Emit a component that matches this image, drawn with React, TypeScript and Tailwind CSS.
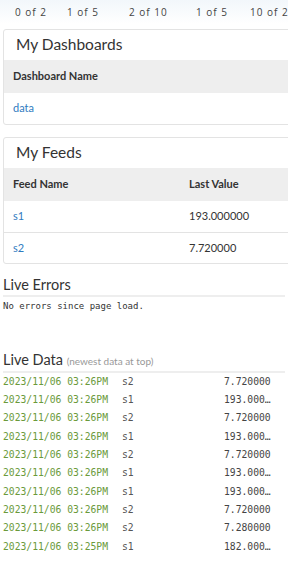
// Страница устройства: дашборды, фиды, ошибки и живые данные

import React from 'react';

const pagers = [
  { label: '0 of 2', w: 'w-[52px]' },
  { label: '1 of 5', w: 'w-[62px]' },
  { label: '2 of 10', w: 'w-[67px]' },
  { label: '1 of 5', w: 'w-[54px]' },
  { label: '10 of 2', w: 'w-[60px]' },
];

const feeds = [
  { name: 's1', value: '193.000000' },
  { name: 's2', value: '7.720000' },
];

const liveData = [
  { time: '2023/11/06 03:26PM', feed: 's2', value: '7.720000' },
  { time: '2023/11/06 03:26PM', feed: 's1', value: '193.000000' },
  { time: '2023/11/06 03:26PM', feed: 's2', value: '7.720000' },
  { time: '2023/11/06 03:26PM', feed: 's1', value: '193.000000' },
  { time: '2023/11/06 03:26PM', feed: 's2', value: '7.720000' },
  { time: '2023/11/06 03:26PM', feed: 's1', value: '193.000000' },
  { time: '2023/11/06 03:26PM', feed: 's1', value: '193.000000' },
  { time: '2023/11/06 03:26PM', feed: 's2', value: '7.720000' },
  { time: '2023/11/06 03:26PM', feed: 's2', value: '7.280000' },
  { time: '2023/11/06 03:25PM', feed: 's1', value: '182.000000' },
];

const sans = "font-['Lato','Open_Sans',sans-serif]";
const mono = "font-['DejaVu_Sans_Mono',monospace]";

export default function App() {
  return (
    <div className="w-[288px] h-[576px] overflow-hidden bg-white text-[#333]">
      {/* Счётчики страниц сверху */}
      <div className={`h-[24px] flex items-center pl-[15px] whitespace-nowrap bg-gradient-to-b from-[#f2f7fb] to-white text-[10px] tracking-[1px] text-[#444] font-['Open_Sans',sans-serif]`}>
        {pagers.map((p, i) => (
          <span key={i} className={`${p.w} shrink-0`}>{p.label}</span>
        ))}
      </div>

      {/* Мои дашборды */}
      <div className={`ml-[3px] mt-[5px] w-[300px] border border-[#e3e3e3] rounded-[3px] ${sans}`}>
        <div className="h-[30px] flex items-center pl-[12px] text-[15.5px] text-[#333]">My Dashboards</div>
        <div className="h-[33px] flex items-center pl-[9px] bg-[#eeeeee] text-[11px] font-bold text-[#333]">Dashboard Name</div>
        <div className="h-[31px] flex items-center pl-[9px] text-[11px] text-[#2f7bbf]">data</div>
      </div>

      {/* Мои фиды */}
      <div className={`ml-[3px] mt-[12px] w-[300px] border border-[#e3e3e3] rounded-[3px] ${sans}`}>
        <div className="h-[30px] flex items-center pl-[12px] text-[15.5px] text-[#333]">My Feeds</div>
        <div className="h-[33px] flex items-center pl-[9px] bg-[#eeeeee] text-[11px] font-bold text-[#333]">
          <span className="w-[176px]">Feed Name</span>
          <span>Last Value</span>
        </div>
        {feeds.map((f, i) => (
          <div key={f.name} className={`h-[31px] flex items-center pl-[9px] text-[11px] ${i > 0 ? 'border-t border-[#e3e3e3]' : ''}`}>
            <span className="w-[176px] text-[#2f7bbf]">{f.name}</span>
            <span className="text-[#333]">{f.value}</span>
          </div>
        ))}
      </div>

      {/* Живые ошибки */}
      <div className="px-[3px] mt-[12px]">
        <h2 className={`${sans} text-[14.5px] leading-[18px] text-[#333] pb-[1px] border-b-2 border-[#eeeeee]`}>Live Errors</h2>
        <p className={`${mono} text-[9px] leading-[16px] text-[#333] mt-[1px]`}>No errors since page load.</p>
      </div>

      {/* Живые данные */}
      <div className="px-[3px] mt-[37px]">
        <h2 className={`${sans} text-[14.5px] leading-[18px] text-[#333] pb-[1px] border-b-2 border-[#eeeeee]`}>
          Live Data <span className="text-[10px] text-[#999]">(newest data at top)</span>
        </h2>
        <div className={`${mono} text-[9.7px]`}>
          {liveData.map((r, i) => (
            <div key={i} className="h-[18.3px] flex items-center whitespace-nowrap">
              <span className="w-[119px] shrink-0 text-[#6a9a3a]">{r.time}</span>
              <span className="w-[102px] shrink-0 text-[#555]">{r.feed}</span>
              <span className="w-[47px] shrink-0 overflow-hidden text-ellipsis text-[#444]">{r.value}</span>
            </div>
          ))}
        </div>
      </div>
    </div>
  );
}
